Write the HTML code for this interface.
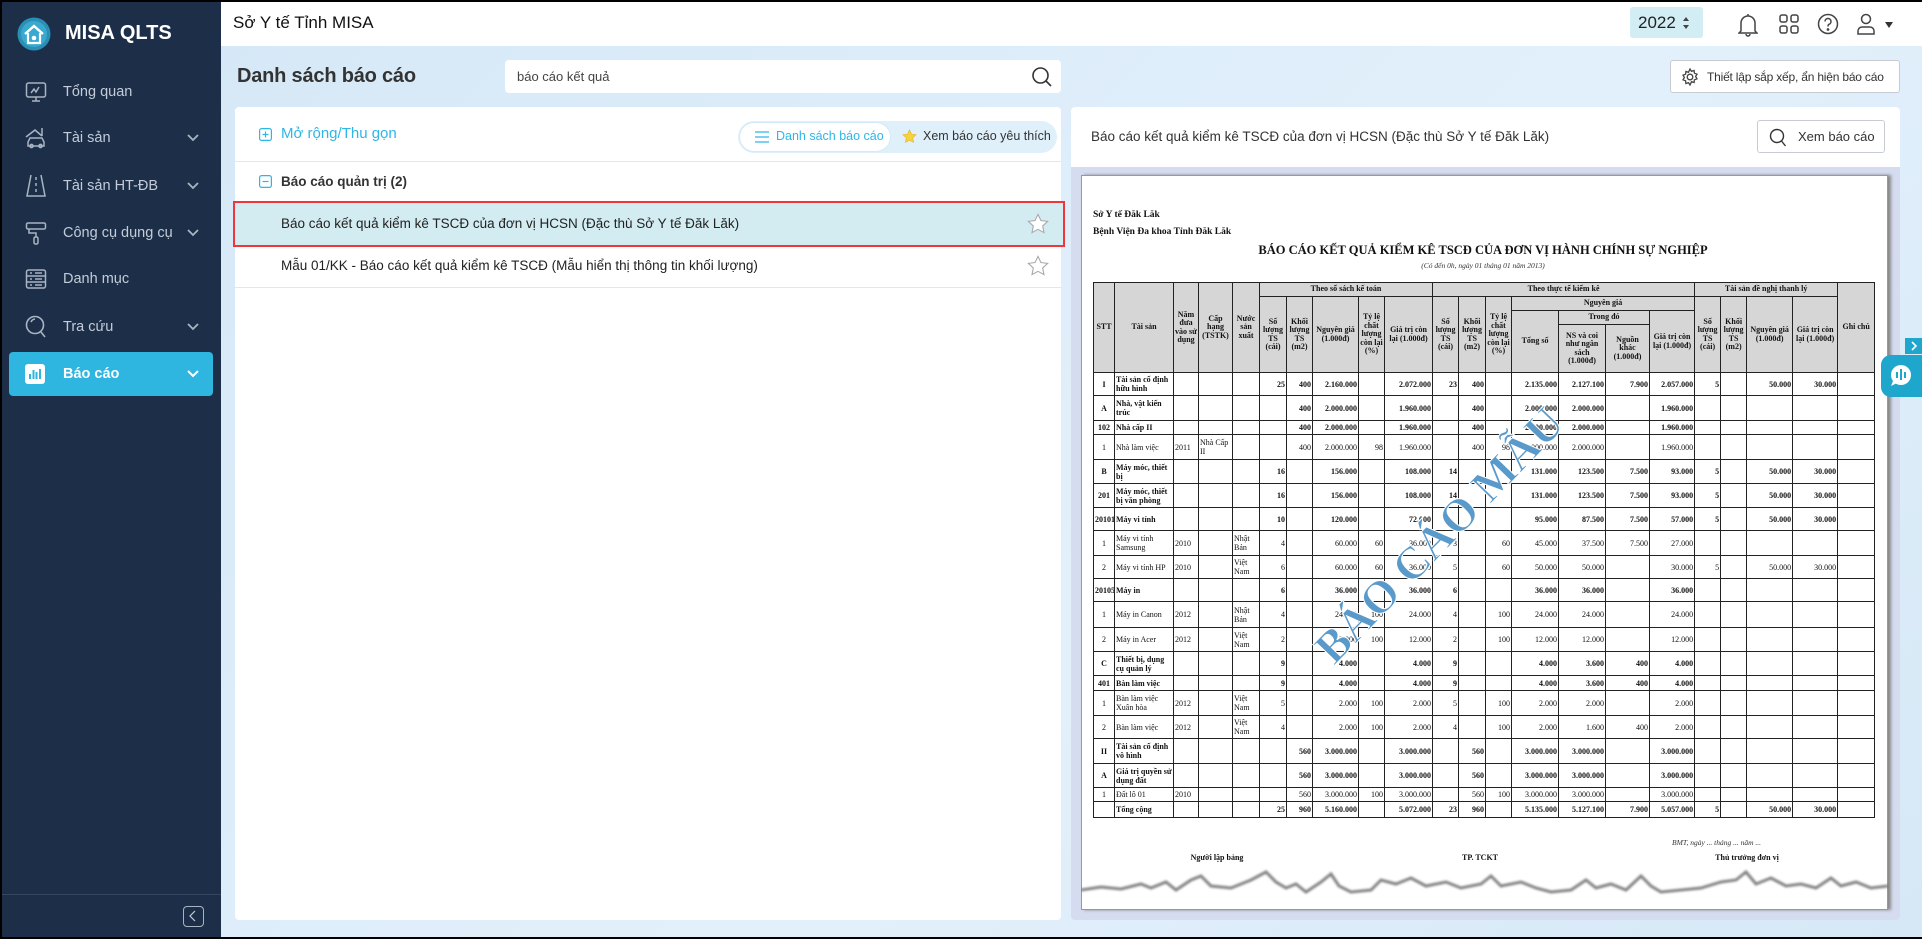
<!DOCTYPE html>
<html><head><meta charset="utf-8">
<style>
*{box-sizing:border-box;margin:0;padding:0}
body{width:1922px;height:939px;overflow:hidden;font-family:"Liberation Sans",sans-serif;background:#000;position:relative}
.abs{position:absolute}
#app{position:absolute;left:2px;top:2px;width:1920px;height:935px;background:linear-gradient(135deg,#d4e7f6,#e2f0fb 60%,#d6e8f6);overflow:hidden}
#side{position:absolute;left:0;top:0;width:219px;height:935px;background:#1d2f48}
.mi{position:absolute;left:0;width:219px;height:44px;color:#c3ccd8;font-size:14.5px}
.mi span{position:absolute;left:61px;top:50%;transform:translateY(-50%)}
.mi svg.ic{position:absolute;left:23px;top:50%;transform:translateY(-50%)}
.mi svg.ch{position:absolute;left:184px;top:50%;transform:translateY(-50%)}
#top{position:absolute;left:219px;top:0;width:1701px;height:44px;background:#fff}
.panel{position:absolute;background:#fff;border-radius:4px}
table{border-collapse:collapse;table-layout:fixed;font-family:"Liberation Serif",serif;font-size:8px;line-height:9px;color:#111}
td{border:1px solid #222;padding:0 1px;overflow:hidden;vertical-align:middle;text-align:right;white-space:normal}
td.l{text-align:left}td.c{text-align:center}
thead td{background:#d6d6d6;text-align:center;font-weight:bold;line-height:8.5px}
tr.b td{font-weight:bold}
.wm{position:absolute;left:1437px;top:533px;font-family:"Liberation Serif",serif;font-weight:bold;font-size:46px;color:#5a9acb;transform:translate(-50%,-50%) rotate(-46deg);white-space:nowrap;-webkit-text-stroke:1px #fff}
</style></head><body>
<div id="app">
<div id="side">
  <svg class="abs" style="left:15px;top:15px" width="34" height="34" viewBox="0 0 34 34"><circle cx="17" cy="17" r="16.5" fill="#2a8fb5"/><circle cx="17" cy="17" r="13" fill="#3aa8cf"/><path d="M8 17 L17 9 L26 17" stroke="#fff" stroke-width="2.5" fill="none"/><path d="M11 16 V26 H23 V16" stroke="#fff" stroke-width="2.2" fill="none"/><circle cx="17" cy="21" r="2.3" fill="#fff"/></svg>
  <div class="abs" style="left:63px;top:20px;color:#fff;font-weight:bold;font-size:20px">MISA QLTS</div>
  <div class="mi" style="top:68px"><svg class="ic" width="22" height="22" viewBox="0 0 22 22" fill="none" stroke="#a9b4c2" stroke-width="1.5"><rect x="1.5" y="2" width="19" height="14" rx="2"/><path d="M6 12l3-4 2 3 3-5M11 16v4M7 20h8"/></svg><span>Tổng quan</span></div>
  <div class="mi" style="top:114px"><svg class="ic" width="22" height="22" viewBox="0 0 22 22" fill="none" stroke="#a9b4c2" stroke-width="1.5"><path d="M1 10L10 3l7 6M17 1v8"/><path d="M3 19v-4l2-4h12l2 4v4z"/><circle cx="6.5" cy="19" r="1.6"/><circle cx="15.5" cy="19" r="1.6"/></svg><span>Tài sản</span><svg class="ch" width="14" height="10" viewBox="0 0 14 10"><path d="M2 2l5 5 5-5" stroke="#a9b4c2" stroke-width="1.8" fill="none"/></svg></div>
  <div class="mi" style="top:162px"><svg class="ic" width="22" height="24" viewBox="0 0 22 24" fill="none" stroke="#a9b4c2" stroke-width="1.5"><path d="M6 1L2 22h18L16 1M11 3v3M11 9v3M11 15v3"/></svg><span>Tài sản HT-ĐB</span><svg class="ch" width="14" height="10" viewBox="0 0 14 10"><path d="M2 2l5 5 5-5" stroke="#a9b4c2" stroke-width="1.8" fill="none"/></svg></div>
  <div class="mi" style="top:209px"><svg class="ic" width="22" height="24" viewBox="0 0 22 24" fill="none" stroke="#a9b4c2" stroke-width="1.5"><rect x="1.5" y="2" width="19" height="6" rx="1.5"/><path d="M4 8v4h7v4"/><rect x="9" y="16" width="4" height="7" rx="1.5"/></svg><span>Công cụ dụng cụ</span><svg class="ch" width="14" height="10" viewBox="0 0 14 10"><path d="M2 2l5 5 5-5" stroke="#a9b4c2" stroke-width="1.8" fill="none"/></svg></div>
  <div class="mi" style="top:255px"><svg class="ic" width="22" height="22" viewBox="0 0 22 22" fill="none" stroke="#a9b4c2" stroke-width="1.5"><rect x="1.5" y="2" width="19" height="18" rx="2"/><path d="M1.5 8h19M1.5 14h19M5 5h2M10 5h7M5 11h2M10 11h7M5 17h2M10 17h7"/></svg><span>Danh mục</span></div>
  <div class="mi" style="top:303px"><svg class="ic" width="22" height="24" viewBox="0 0 22 24" fill="none" stroke="#a9b4c2" stroke-width="1.6"><circle cx="10" cy="10" r="8.5"/><path d="M16 17l4 5M6 7a5 5 0 0 1 4-3"/></svg><span>Tra cứu</span><svg class="ch" width="14" height="10" viewBox="0 0 14 10"><path d="M2 2l5 5 5-5" stroke="#a9b4c2" stroke-width="1.8" fill="none"/></svg></div>
  <div class="abs" style="left:7px;top:350px;width:204px;height:44px;background:#2eb5e0;border-radius:4px"></div>
  <div class="mi" style="top:350px;color:#fff;font-weight:bold"><svg class="ic" width="20" height="20" viewBox="0 0 20 20"><rect width="20" height="20" rx="3" fill="#fff"/><path d="M5 15V10M8.5 15V6M11.5 15V8M15 15V5" stroke="#2eb5e0" stroke-width="2"/></svg><span>Báo cáo</span><svg class="ch" width="14" height="10" viewBox="0 0 14 10"><path d="M2 2l5 5 5-5" stroke="#fff" stroke-width="2" fill="none"/></svg></div>
  <div class="abs" style="left:0;top:892px;width:219px;height:1px;background:#35475f"></div>
  <div class="abs" style="left:181px;top:904px;width:21px;height:21px;border:1.5px solid #a9b4c2;border-radius:4px"><svg width="18" height="18" viewBox="0 0 18 18"><path d="M11 4l-5 5 5 5" stroke="#c3ccd8" stroke-width="1.2" fill="none"/></svg></div>
</div>
<div id="top">
  <div class="abs" style="left:12px;top:11px;font-size:17px;color:#111">Sở Y tế Tỉnh MISA</div>
  <div class="abs" style="left:1409px;top:5px;width:73px;height:31px;background:#d3edf5;border-radius:3px"><span class="abs" style="left:8px;top:6px;font-size:17px;color:#222">2022</span><svg class="abs" style="left:52px;top:9px" width="8" height="14" viewBox="0 0 8 14"><path d="M1 5l3-4 3 4zM1 9l3 4 3-4z" fill="#444"/></svg></div>
  <svg class="abs" style="left:1517px;top:11px" width="20" height="24" viewBox="0 0 20 24" fill="none" stroke="#444" stroke-width="1.5"><path d="M3 18V10a7 7 0 0 1 14 0v8l2 2H1zM8 21a2 2 0 0 0 4 0M10 1v2"/></svg>
  <svg class="abs" style="left:1558px;top:12px" width="20" height="20" viewBox="0 0 20 20" fill="none" stroke="#444" stroke-width="1.5"><rect x="1" y="1" width="7" height="7" rx="2"/><rect x="12" y="1" width="7" height="7" rx="2"/><rect x="1" y="12" width="7" height="7" rx="2"/><rect x="12" y="12" width="7" height="7" rx="2"/></svg>
  <svg class="abs" style="left:1596px;top:11px" width="22" height="22" viewBox="0 0 22 22" fill="none" stroke="#444" stroke-width="1.5"><circle cx="11" cy="11" r="9.5"/><path d="M8 8.5a3 3 0 1 1 4 2.8c-1 .4-1 1-1 2.2"/><circle cx="11" cy="16.5" r=".6" fill="#444"/></svg>
  <svg class="abs" style="left:1635px;top:11px" width="20" height="22" viewBox="0 0 20 22" fill="none" stroke="#444" stroke-width="1.5"><circle cx="10" cy="6" r="4.5"/><path d="M2 21v-3a4 4 0 0 1 4-4h8a4 4 0 0 1 4 4v3z"/></svg>
  <svg class="abs" style="left:1664px;top:20px" width="8" height="6" viewBox="0 0 8 6"><path d="M0 0h8L4 6z" fill="#333"/></svg>
</div>
<div class="abs" style="left:235px;top:63px;font-size:20px;color:#333;font-weight:bold;letter-spacing:-.2px">Danh sách báo cáo</div>
<div class="abs" style="left:503px;top:58px;width:556px;height:33px;background:#fff;border-radius:4px"><span class="abs" style="left:12px;top:9px;font-size:13px;color:#444">báo cáo kết quả</span><svg class="abs" style="left:526px;top:6px" width="22" height="22" viewBox="0 0 22 22" fill="none" stroke="#333" stroke-width="1.6"><circle cx="9.5" cy="9.5" r="7.5"/><path d="M15 15l5 5"/></svg></div>
<div class="abs" style="left:1668px;top:58px;width:230px;height:33px;background:#fff;border:1px solid #c8ccd2;border-radius:3px;white-space:nowrap"><svg class="abs" style="left:10px;top:7px" width="18" height="18" viewBox="0 0 18 18" fill="none" stroke="#444" stroke-width="1.3"><circle cx="9" cy="9" r="2.8"/><path d="M9 1l1.5 2.3 2.6-.8.3 2.7 2.6 1-1.4 2.3 1.4 2.3-2.6 1-.3 2.7-2.6-.8L9 17l-1.5-2.3-2.6.8-.3-2.7-2.6-1L3.4 9.5 2 7.2l2.6-1 .3-2.7 2.6.8z"/></svg><span class="abs" style="left:36px;top:9px;font-size:12px;color:#333;letter-spacing:-.2px">Thiết lập sắp xếp, ẩn hiện báo cáo</span></div>

<!-- left panel -->
<div class="panel" style="left:233px;top:105px;width:826px;height:813px">
  <svg class="abs" style="left:24px;top:21px" width="13" height="13" viewBox="0 0 13 13" fill="none" stroke="#2fb5e6" stroke-width="1.2"><rect x=".6" y=".6" width="11.8" height="11.8" rx="2"/><path d="M6.5 3.5v6M3.5 6.5h6"/></svg>
  <div class="abs" style="left:46px;top:18px;font-size:15px;color:#2fb5e6">Mở rộng/Thu gọn</div>
  <div class="abs" style="left:503px;top:14px;width:319px;height:32px;background:#dff0fb;border-radius:16px"></div>
  <div class="abs" style="left:505px;top:16px;width:150px;height:28px;background:#fff;border-radius:14px;box-shadow:0 0 0 1px #d2ebf8"></div>
  <svg class="abs" style="left:520px;top:24px" width="14" height="12" viewBox="0 0 14 12" stroke="#2fb5e6" stroke-width="1.3"><path d="M0 1h14M0 6h14M0 11h14"/></svg>
  <div class="abs" style="left:541px;top:22px;font-size:12.5px;color:#2fb5e6">Danh sách báo cáo</div>
  <svg class="abs" style="left:667px;top:22px" width="15" height="15" viewBox="0 0 24 24"><path d="M12 1.5l3.2 6.7 7.3.9-5.4 5 1.4 7.3L12 17.8l-6.5 3.6 1.4-7.3-5.4-5 7.3-.9z" fill="#f7d23f" stroke="#e0b32a"/></svg>
  <div class="abs" style="left:688px;top:22px;font-size:12.5px;color:#333">Xem báo cáo yêu thích</div>
  <div class="abs" style="left:0;top:54px;width:826px;height:1px;background:#e3e6ea"></div>
  <svg class="abs" style="left:24px;top:68px" width="13" height="13" viewBox="0 0 13 13" fill="none" stroke="#2fb5e6" stroke-width="1.2"><rect x=".6" y=".6" width="11.8" height="11.8" rx="2"/><path d="M3.5 6.5h6"/></svg>
  <div class="abs" style="left:46px;top:67px;font-size:13.5px;color:#333;font-weight:bold">Báo cáo quản trị (2)</div>
  <div class="abs" style="left:-2px;top:94px;width:832px;height:46px;background:#d2ecf2;border:2.5px solid #f0353b"></div>
  <div class="abs" style="left:46px;top:109px;font-size:13.5px;color:#222">Báo cáo kết quả kiểm kê TSCĐ của đơn vị HCSN (Đặc thù Sở Y tế Đăk Lăk)</div>
  <svg class="abs" style="left:792px;top:106px" width="22" height="22" viewBox="0 0 24 24"><path d="M12 1.5l3.2 6.7 7.3.9-5.4 5 1.4 7.3L12 17.8l-6.5 3.6 1.4-7.3-5.4-5 7.3-.9z" fill="#fff" stroke="#a9a9a9" stroke-width="1.2"/></svg>
  <div class="abs" style="left:46px;top:151px;font-size:13.5px;color:#222">Mẫu 01/KK - Báo cáo kết quả kiểm kê TSCĐ (Mẫu hiển thị thông tin khối lượng)</div>
  <svg class="abs" style="left:792px;top:148px" width="22" height="22" viewBox="0 0 24 24"><path d="M12 1.5l3.2 6.7 7.3.9-5.4 5 1.4 7.3L12 17.8l-6.5 3.6 1.4-7.3-5.4-5 7.3-.9z" fill="#fff" stroke="#a9a9a9" stroke-width="1.2"/></svg>
  <div class="abs" style="left:0;top:180px;width:826px;height:1px;background:#e3e6ea"></div>
</div>

<!-- right panel -->
<div class="panel" style="left:1069px;top:105px;width:829px;height:813px;background:#d6dcf0">
  <div class="abs" style="left:0;top:0;width:829px;height:60px;background:#fff;border-radius:4px 4px 0 0"></div>
  <div class="abs" style="left:20px;top:22px;font-size:13.5px;color:#333">Báo cáo kết quả kiểm kê TSCĐ của đơn vị HCSN (Đặc thù Sở Y tế Đăk Lăk)</div>
  <div class="abs" style="left:686px;top:13px;width:128px;height:33px;border:1px solid #c8ccd2;border-radius:3px;background:#fff"><svg class="abs" style="left:11px;top:7px" width="18" height="19" viewBox="0 0 18 19" fill="none" stroke="#333" stroke-width="1.4"><circle cx="8" cy="8" r="6.5"/><path d="M12.5 13l4 5"/></svg><span class="abs" style="left:40px;top:8px;font-size:13px;color:#333">Xem báo cáo</span></div>
</div>
<!-- paper -->
<div class="abs" style="left:1079px;top:173px;width:807px;height:735px;background:#fff;border:1px solid #999;box-shadow:3px 0 3px #888"></div>
<svg class="abs" style="left:1079px;top:860px" width="808" height="50" viewBox="0 0 808 50"><path d="M0 28 L20 25 L40 27 L60 22 L70 26 L85 20 L95 28 L110 18 L120 14 L130 24 L150 26 L170 18 L185 10 L195 20 L205 26 L215 22 L225 30 L240 20 L250 12 L258 24 L270 30 L290 28 L300 18 L315 22 L330 16 L345 24 L365 20 L380 26 L400 22 L410 14 L420 24 L440 20 L455 26 L470 30 L490 28 L505 18 L515 26 L530 22 L545 28 L560 14 L570 24 L580 30 L600 28 L620 26 L640 20 L655 18 L665 10 L675 22 L690 16 L705 24 L720 22 L735 26 L750 16 L760 24 L775 20 L790 26 L807 24" stroke="#666" stroke-width="3" fill="none" opacity=".8" style="filter:blur(1px)"/></svg>
<div class="abs" style="left:1091px;top:205px;font-family:'Liberation Serif',serif;font-size:9.5px;font-weight:bold;color:#111;line-height:17px">Sở Y tế Đăk Lăk<br>Bệnh Viện Đa khoa Tỉnh Đăk Lăk</div>
<div class="abs" style="left:1081px;top:241px;width:800px;text-align:center;font-family:'Liberation Serif',serif;font-size:12.5px;font-weight:bold;color:#111">BÁO CÁO KẾT QUẢ KIỂM KÊ TSCĐ CỦA ĐƠN VỊ HÀNH CHÍNH SỰ NGHIỆP</div>
<div class="abs" style="left:1081px;top:259px;width:800px;text-align:center;font-family:'Liberation Serif',serif;font-size:7.5px;font-style:italic;color:#333">(Có đến 0h, ngày 01 tháng 01 năm 2013)</div>

<table class="abs" style="left:1091px;top:280px;width:781px">
<colgroup><col style="width:21px"><col style="width:59px"><col style="width:25px"><col style="width:34px"><col style="width:27px"><col style="width:27px"><col style="width:26px"><col style="width:46px"><col style="width:26px"><col style="width:48px"><col style="width:26px"><col style="width:27px"><col style="width:26px"><col style="width:47px"><col style="width:47px"><col style="width:44px"><col style="width:45px"><col style="width:26px"><col style="width:26px"><col style="width:46px"><col style="width:45px"><col style="width:37px"></colgroup>
<thead>
<tr style="height:14px"><td rowspan="4">STT</td><td rowspan="4">Tài sản</td><td rowspan="4">Năm đưa vào sử dụng</td><td rowspan="4">Cấp hạng (TSTK)</td><td rowspan="4">Nước sản xuất</td><td colspan="5">Theo sổ sách kế toán</td><td colspan="7">Theo thực tế kiểm kê</td><td colspan="4">Tài sản đề nghị thanh lý</td><td rowspan="4">Ghi chú</td></tr>
<tr style="height:14px"><td rowspan="3">Số lượng TS (cái)</td><td rowspan="3">Khối lượng TS (m2)</td><td rowspan="3">Nguyên giá (1.000đ)</td><td rowspan="3">Tỷ lệ chất lượng còn lại (%)</td><td rowspan="3">Giá trị còn lại (1.000đ)</td><td rowspan="3">Số lượng TS (cái)</td><td rowspan="3">Khối lượng TS (m2)</td><td rowspan="3">Tỷ lệ chất lượng còn lại (%)</td><td colspan="4">Nguyên giá</td><td rowspan="3">Số lượng TS (cái)</td><td rowspan="3">Khối lượng TS (m2)</td><td rowspan="3">Nguyên giá (1.000đ)</td><td rowspan="3">Giá trị còn lại (1.000đ)</td></tr>
<tr style="height:14px"><td rowspan="2">Tổng số</td><td colspan="2">Trong đó</td><td rowspan="2">Giá trị còn lại (1.000đ)</td></tr>
<tr style="height:48px"><td>NS và coi như ngân sách (1.000đ)</td><td>Nguồn khác (1.000đ)</td></tr>
</thead>
<tbody>
<tr class="b" style="height:23px"><td class="c">I</td><td class="l">Tài sản cố định hữu hình</td><td></td><td></td><td></td><td>25</td><td>400</td><td>2.160.000</td><td></td><td>2.072.000</td><td>23</td><td>400</td><td></td><td>2.135.000</td><td>2.127.100</td><td>7.900</td><td>2.057.000</td><td>5</td><td></td><td>50.000</td><td>30.000</td><td></td></tr>
<tr class="b" style="height:25px"><td class="c">A</td><td class="l">Nhà, vật kiến trúc</td><td></td><td></td><td></td><td></td><td>400</td><td>2.000.000</td><td></td><td>1.960.000</td><td></td><td>400</td><td></td><td>2.000.000</td><td>2.000.000</td><td></td><td>1.960.000</td><td></td><td></td><td></td><td></td><td></td></tr>
<tr class="b" style="height:14px"><td class="c">102</td><td class="l">Nhà cấp II</td><td></td><td></td><td></td><td></td><td>400</td><td>2.000.000</td><td></td><td>1.960.000</td><td></td><td>400</td><td></td><td>2.000.000</td><td>2.000.000</td><td></td><td>1.960.000</td><td></td><td></td><td></td><td></td><td></td></tr>
<tr style="height:25px"><td class="c">1</td><td class="l">Nhà làm việc</td><td class="l">2011</td><td class="l">Nhà Cấp II</td><td></td><td></td><td>400</td><td>2.000.000</td><td>98</td><td>1.960.000</td><td></td><td>400</td><td>98</td><td>2.000.000</td><td>2.000.000</td><td></td><td>1.960.000</td><td></td><td></td><td></td><td></td><td></td></tr>
<tr class="b" style="height:24px"><td class="c">B</td><td class="l">Máy móc, thiết bị</td><td></td><td></td><td></td><td>16</td><td></td><td>156.000</td><td></td><td>108.000</td><td>14</td><td></td><td></td><td>131.000</td><td>123.500</td><td>7.500</td><td>93.000</td><td>5</td><td></td><td>50.000</td><td>30.000</td><td></td></tr>
<tr class="b" style="height:24px"><td class="c">201</td><td class="l">Máy móc, thiết bị văn phòng</td><td></td><td></td><td></td><td>16</td><td></td><td>156.000</td><td></td><td>108.000</td><td>14</td><td></td><td></td><td>131.000</td><td>123.500</td><td>7.500</td><td>93.000</td><td>5</td><td></td><td>50.000</td><td>30.000</td><td></td></tr>
<tr class="b" style="height:23px"><td class="c">20101</td><td class="l">Máy vi tính</td><td></td><td></td><td></td><td>10</td><td></td><td>120.000</td><td></td><td>72.000</td><td></td><td></td><td></td><td>95.000</td><td>87.500</td><td>7.500</td><td>57.000</td><td>5</td><td></td><td>50.000</td><td>30.000</td><td></td></tr>
<tr style="height:25px"><td class="c">1</td><td class="l">Máy vi tính Samsung</td><td class="l">2010</td><td></td><td class="l">Nhật Bản</td><td>4</td><td></td><td>60.000</td><td>60</td><td>36.000</td><td>3</td><td></td><td>60</td><td>45.000</td><td>37.500</td><td>7.500</td><td>27.000</td><td></td><td></td><td></td><td></td><td></td></tr>
<tr style="height:23px"><td class="c">2</td><td class="l">Máy vi tính HP</td><td class="l">2010</td><td></td><td class="l">Việt Nam</td><td>6</td><td></td><td>60.000</td><td>60</td><td>36.000</td><td>5</td><td></td><td>60</td><td>50.000</td><td>50.000</td><td></td><td>30.000</td><td>5</td><td></td><td>50.000</td><td>30.000</td><td></td></tr>
<tr class="b" style="height:23px"><td class="c">20105</td><td class="l">Máy in</td><td></td><td></td><td></td><td>6</td><td></td><td>36.000</td><td></td><td>36.000</td><td>6</td><td></td><td></td><td>36.000</td><td>36.000</td><td></td><td>36.000</td><td></td><td></td><td></td><td></td><td></td></tr>
<tr style="height:26px"><td class="c">1</td><td class="l">Máy in Canon</td><td class="l">2012</td><td></td><td class="l">Nhật Bản</td><td>4</td><td></td><td>24.000</td><td>100</td><td>24.000</td><td>4</td><td></td><td>100</td><td>24.000</td><td>24.000</td><td></td><td>24.000</td><td></td><td></td><td></td><td></td><td></td></tr>
<tr style="height:24px"><td class="c">2</td><td class="l">Máy in Acer</td><td class="l">2012</td><td></td><td class="l">Việt Nam</td><td>2</td><td></td><td>12.000</td><td>100</td><td>12.000</td><td>2</td><td></td><td>100</td><td>12.000</td><td>12.000</td><td></td><td>12.000</td><td></td><td></td><td></td><td></td><td></td></tr>
<tr class="b" style="height:24px"><td class="c">C</td><td class="l">Thiết bị, dụng cụ quản lý</td><td></td><td></td><td></td><td>9</td><td></td><td>4.000</td><td></td><td>4.000</td><td>9</td><td></td><td></td><td>4.000</td><td>3.600</td><td>400</td><td>4.000</td><td></td><td></td><td></td><td></td><td></td></tr>
<tr class="b" style="height:15px"><td class="c">401</td><td class="l">Bàn làm việc</td><td></td><td></td><td></td><td>9</td><td></td><td>4.000</td><td></td><td>4.000</td><td>9</td><td></td><td></td><td>4.000</td><td>3.600</td><td>400</td><td>4.000</td><td></td><td></td><td></td><td></td><td></td></tr>
<tr style="height:25px"><td class="c">1</td><td class="l">Bàn làm việc Xuân hòa</td><td class="l">2012</td><td></td><td class="l">Việt Nam</td><td>5</td><td></td><td>2.000</td><td>100</td><td>2.000</td><td>5</td><td></td><td>100</td><td>2.000</td><td>2.000</td><td></td><td>2.000</td><td></td><td></td><td></td><td></td><td></td></tr>
<tr style="height:23px"><td class="c">2</td><td class="l">Bàn làm việc</td><td class="l">2012</td><td></td><td class="l">Việt Nam</td><td>4</td><td></td><td>2.000</td><td>100</td><td>2.000</td><td>4</td><td></td><td>100</td><td>2.000</td><td>1.600</td><td>400</td><td>2.000</td><td></td><td></td><td></td><td></td><td></td></tr>
<tr class="b" style="height:25px"><td class="c">II</td><td class="l">Tài sản cố định vô hình</td><td></td><td></td><td></td><td></td><td>560</td><td>3.000.000</td><td></td><td>3.000.000</td><td></td><td>560</td><td></td><td>3.000.000</td><td>3.000.000</td><td></td><td>3.000.000</td><td></td><td></td><td></td><td></td><td></td></tr>
<tr class="b" style="height:24px"><td class="c">A</td><td class="l">Giá trị quyền sử dụng đất</td><td></td><td></td><td></td><td></td><td>560</td><td>3.000.000</td><td></td><td>3.000.000</td><td></td><td>560</td><td></td><td>3.000.000</td><td>3.000.000</td><td></td><td>3.000.000</td><td></td><td></td><td></td><td></td><td></td></tr>
<tr style="height:14px"><td class="c">1</td><td class="l">Đất lô 01</td><td class="l">2010</td><td></td><td></td><td></td><td>560</td><td>3.000.000</td><td>100</td><td>3.000.000</td><td></td><td>560</td><td>100</td><td>3.000.000</td><td>3.000.000</td><td></td><td>3.000.000</td><td></td><td></td><td></td><td></td><td></td></tr>
<tr class="b" style="height:16px"><td class="c"></td><td class="l">Tổng cộng</td><td></td><td></td><td></td><td>25</td><td>960</td><td>5.160.000</td><td></td><td>5.072.000</td><td>23</td><td>960</td><td></td><td>5.135.000</td><td>5.127.100</td><td>7.900</td><td>5.057.000</td><td>5</td><td></td><td>50.000</td><td>30.000</td><td></td></tr>
</tbody></table>
<div class="wm">BÁO CÁO MẪU</div>
<div class="abs" style="left:1670px;top:836px;font-family:'Liberation Serif',serif;font-size:7.5px;font-style:italic;color:#333">BMT, ngày ... tháng ... năm ...</div>
<div class="abs" style="left:1170px;top:851px;width:90px;text-align:center;font-family:'Liberation Serif',serif;font-size:8px;font-weight:bold;color:#111">Người lập bảng</div>
<div class="abs" style="left:1433px;top:851px;width:90px;text-align:center;font-family:'Liberation Serif',serif;font-size:8px;font-weight:bold;color:#111">TP. TCKT</div>
<div class="abs" style="left:1700px;top:851px;width:90px;text-align:center;font-family:'Liberation Serif',serif;font-size:8px;font-weight:bold;color:#111">Thủ trưởng đơn vị</div>

<div class="abs" style="left:1903px;top:336px;width:17px;height:16px;background:#1fa6cc"><svg width="17" height="16" viewBox="0 0 17 16"><path d="M7 4l4 4-4 4" stroke="#fff" stroke-width="1.6" fill="none"/></svg></div>
<div class="abs" style="left:1879px;top:353px;width:41px;height:42px;background:#1fa6cc;border-radius:10px 0 0 10px"><svg class="abs" style="left:8px;top:9px" width="24" height="24" viewBox="0 0 24 24"><circle cx="12" cy="11" r="10" fill="#fff"/><path d="M4 17l-2 5 6-3z" fill="#fff"/><path d="M8 8v6M12 5v11M16 8v6" stroke="#1fa6cc" stroke-width="2"/></svg></div>
</div>
</body></html>
